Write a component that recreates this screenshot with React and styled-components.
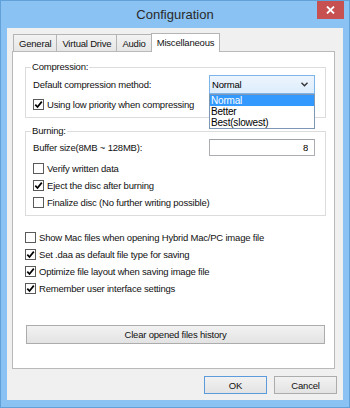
import React from "react";
import styled, { createGlobalStyle } from "styled-components";

const Global = createGlobalStyle`
  html, body { margin: 0; padding: 0; background: #ffffff; }
  * { box-sizing: border-box; }
`;

const Window = styled.div`
  width: 350px;
  height: 408px;
  background: #89c2f3;
  border: 1px solid #62a0d8;
  display: flex;
  flex-direction: column;
  font-family: "Liberation Sans", Arial, sans-serif;
  font-size: 9.5px;
  letter-spacing: -0.2px;
  color: #111;
`;

const TitleBar = styled.div`
  height: 27px;
  display: grid;
  grid-template-columns: 1fr auto 1fr;
  align-items: center;
`;

const Title = styled.div`
  grid-column: 2;
  font-size: 13px;
  letter-spacing: 0;
  color: #2a2a2a;
`;

const CloseButton = styled.div`
  grid-column: 3;
  justify-self: end;
  align-self: start;
  width: 27px;
  height: 18px;
  margin-right: 5px;
  background: #c75050;
  display: flex;
  align-items: center;
  justify-content: center;
`;

const Client = styled.div`
  flex: 1;
  margin: 0 6px 7px;
  background: #f0f0f0;
  display: flex;
  flex-direction: column;
  padding: 5px 0 6px;
`;

const TabRow = styled.div`
  display: flex;
  align-items: flex-end;
  height: 18px;
  padding-left: 6px;
`;

const Tab = styled.div`
  position: relative;
  z-index: ${(p) => (p.$active ? 1 : 0)};
  height: ${(p) => (p.$active ? 19 : 17)}px;
  margin-bottom: ${(p) => (p.$active ? -1 : 0)}px;
  margin-left: -1px;
  padding: 0 5px ${(p) => (p.$active ? 1 : 0)}px;
  display: flex;
  align-items: center;
  background: ${(p) => (p.$active ? "#ffffff" : "linear-gradient(#f3f3f3, #e6e6e6)")};
  border: 1px solid #b4b4b4;
  border-bottom: none;
  white-space: nowrap;
  &:first-child { margin-left: 0; }
`;

const Panel = styled.div`
  flex: 1;
  margin: 0 8px 0 5px;
  background: #ffffff;
  border: 1px solid #b9b9b9;
  padding: 9px 8px 0 12px;
  display: flex;
  flex-direction: column;
`;

const Group = styled.fieldset`
  margin: ${(p) => (p.$first ? 0 : 7)}px 0 0;
  border: 1px solid #dcdcdc;
  padding: 2px 10px 6px 7px;
  min-width: 0;
  display: flex;
  flex-direction: column;
`;

const Legend = styled.legend`
  padding: 0 1px;
  margin-left: -2px;
  line-height: 12px;
  height: 12px;
`;

const FieldRow = styled.div`
  display: grid;
  grid-template-columns: 1fr 106px;
  align-items: center;
  height: ${(p) => p.$h}px;
`;

const Combo = styled.div`
  position: relative;
  height: 19px;
  border: 1px solid #7eb4ea;
  background: linear-gradient(#edf5fd, #dcecfc);
  display: flex;
  align-items: center;
  justify-content: space-between;
  padding: 0 6px 0 2px;
  color: #000;
`;

const DropList = styled.div`
  position: absolute;
  z-index: 2;
  top: calc(100% + 1px);
  left: -1px;
  right: -1px;
  background: #ffffff;
  border: 1px solid #7d97b6;
  display: flex;
  flex-direction: column;
`;

const DropItem = styled.div`
  height: 11px;
  line-height: 11px;
  padding-left: 1px;
  font-size: 10px;
  background: ${(p) => (p.$selected ? "#3399ff" : "transparent")};
  color: ${(p) => (p.$selected ? "#ffffff" : "#000000")};
`;

const TextBox = styled.input`
  height: 17px;
  width: 106px;
  border: 1px solid #abadb3;
  border-top-color: #9fa2a9;
  background: #ffffff;
  text-align: right;
  padding: 0 6px 0 0;
  font: inherit;
  letter-spacing: inherit;
  color: #000;
  outline: none;
`;

const CheckList = styled.div`
  display: flex;
  flex-direction: column;
  gap: 4px;
  margin-top: ${(p) => p.$mt || 0}px;
`;

const CheckRow = styled.label`
  display: flex;
  align-items: center;
  gap: 3px;
  height: 13px;
  white-space: nowrap;
`;

const Box = styled.span`
  width: 11px;
  height: 11px;
  flex: none;
  border: 1px solid #5a5a5a;
  background: #ffffff;
  display: flex;
  align-items: center;
  justify-content: center;
`;

const WideButton = styled.button`
  margin: 30px 1px 0;
  height: 19px;
  border: 1px solid #acacac;
  background: linear-gradient(#f2f2f2, #e3e3e3);
  font: inherit;
  letter-spacing: inherit;
  color: #111;
  padding: 0;
`;

const ButtonRow = styled.div`
  display: flex;
  justify-content: flex-end;
  gap: 7px;
  margin-top: 7px;
  padding-right: 6px;
`;

const DialogButton = styled.button`
  width: 63px;
  height: 18px;
  border: 1px solid ${(p) => (p.$default ? "#5b9bdb" : "#acacac")};
  background: linear-gradient(#f2f2f2, #e3e3e3);
  font: inherit;
  letter-spacing: inherit;
  color: #111;
  padding: 0;
`;

function Check({ checked, children }) {
  return (
    <CheckRow>
      <Box>
        {checked && (
          <svg width="9" height="9" viewBox="0 0 9 9">
            <path d="M1.3 4.6 L3.5 7 L7.8 1.6" fill="none" stroke="#000" strokeWidth="1.7" />
          </svg>
        )}
      </Box>
      <span>{children}</span>
    </CheckRow>
  );
}

export default function App() {
  return (
    <>
      <Global />
      <Window>
        <TitleBar>
          <Title>Configuration</Title>
          <CloseButton>
            <svg width="9" height="8" viewBox="0 0 9 8">
              <path d="M1 0.5 L8 7.5 M8 0.5 L1 7.5" stroke="#fff" strokeWidth="1.8" />
            </svg>
          </CloseButton>
        </TitleBar>
        <Client>
          <TabRow>
            <Tab>General</Tab>
            <Tab>Virtual Drive</Tab>
            <Tab>Audio</Tab>
            <Tab $active>Miscellaneous</Tab>
          </TabRow>
          <Panel>
            <Group $first>
              <Legend>Compression:</Legend>
              <FieldRow $h={19}>
                <span>Default compression method:</span>
                <Combo>
                  <span>Normal</span>
                  <svg width="7" height="5" viewBox="0 0 7 5">
                    <path d="M0.5 0.8 L3.5 3.8 L6.5 0.8" fill="none" stroke="#333" strokeWidth="1.4" />
                  </svg>
                  <DropList>
                    <DropItem $selected>Normal</DropItem>
                    <DropItem>Better</DropItem>
                    <DropItem>Best(slowest)</DropItem>
                  </DropList>
                </Combo>
              </FieldRow>
              <CheckList $mt={4}>
                <Check checked>Using low priority when compressing</Check>
              </CheckList>
            </Group>
            <Group>
              <Legend>Burning:</Legend>
              <FieldRow $h={17}>
                <span>Buffer size(8MB ~ 128MB):</span>
                <TextBox readOnly defaultValue="8" />
              </FieldRow>
              <CheckList $mt={6}>
                <Check>Verify written data</Check>
                <Check checked>Eject the disc after burning</Check>
                <Check>Finalize disc (No further writing possible)</Check>
              </CheckList>
            </Group>
            <CheckList $mt={15}>
              <Check>Show Mac files when opening Hybrid Mac/PC image file</Check>
              <Check checked>Set .daa as default file type for saving</Check>
              <Check checked>Optimize file layout when saving image file</Check>
              <Check checked>Remember user interface settings</Check>
            </CheckList>
            <WideButton>Clear opened files history</WideButton>
          </Panel>
          <ButtonRow>
            <DialogButton $default>OK</DialogButton>
            <DialogButton>Cancel</DialogButton>
          </ButtonRow>
        </Client>
      </Window>
    </>
  );
}
